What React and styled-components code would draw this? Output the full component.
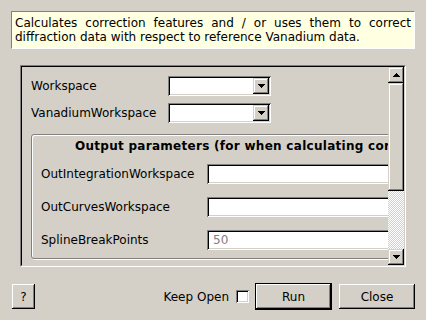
import React from 'react';
import styled, { createGlobalStyle } from 'styled-components';

const GlobalStyle = createGlobalStyle`
    body {
        margin: 0;
        background: #d4d0c8;
        font-family: "DejaVu Sans", "Liberation Sans", sans-serif;
        font-size: 12px;
        color: #000;
    }
`;

// windows-ish bevels
const raised = `
    box-shadow: inset -1px -1px #000, inset 1px 1px #fff, inset -2px -2px #808080;
`;
const raisedSoft = `
    box-shadow: inset -1px -1px #000, inset 1px 1px #d4d0c8, inset -2px -2px #808080, inset 2px 2px #fff;
`;
const sunken = `
    box-shadow: inset 1px 1px #808080, inset -1px -1px #fff, inset 2px 2px #000, inset -2px -2px #d4d0c8;
`;

const Page = styled.div`
    width: 426px;
    height: 320px;
    box-sizing: border-box;
    padding: 11px 11px 0;
    display: flex;
    flex-direction: column;
`;

const Description = styled.div`
    width: 404px;
    height: 38px;
    box-sizing: border-box;
    padding: 4px 3px;
    background: #ffffe1;
    border: 1px solid;
    border-color: #808080 #fff #fff #808080;
    line-height: 14px;
    text-align: justify;
`;

const ScrollFrame = styled.div`
    margin: 16px 9px 0;
    height: 202px;
    box-sizing: border-box;
    border: 1px solid;
    border-color: #808080 #fff #fff #808080;
    display: flex;
`;

const ScrollInner = styled.div`
    flex: 1;
    display: flex;
    min-width: 0;
    border: 1px solid;
    border-color: #000 #d4d0c8 #d4d0c8 #000;
`;

const Viewport = styled.div`
    flex: 1;
    min-width: 0;
    overflow: hidden;
`;

const Content = styled.div`
    width: 560px;
    box-sizing: border-box;
    padding: 9px 0 0 9px;
`;

const ParamGrid = styled.div`
    display: grid;
    grid-template-columns: ${p => p.$labelWidth}px ${p => p.$fieldWidth}px;
    row-gap: ${p => p.$gap}px;
    align-items: center;
`;

const Label = styled.div`
    line-height: 14px;
    white-space: nowrap;
`;

const Combo = styled.div`
    height: 20px;
    box-sizing: border-box;
    padding: 2px;
    background: #fff;
    display: flex;
    justify-content: flex-end;
    ${sunken}
`;

const ArrowButton = styled.div`
    width: 16px;
    height: 16px;
    flex: none;
    background: #d4d0c8;
    display: flex;
    align-items: center;
    justify-content: center;
    ${raisedSoft}
`;

const LineEdit = styled.div`
    height: 20px;
    box-sizing: border-box;
    padding: 2px 6px;
    background: #fff;
    line-height: 16px;
    color: #808080;
    ${sunken}
`;

const Group = styled.div`
    margin-top: 11px;
    border: 1px solid #808080;
    border-radius: 3px;
    box-shadow: inset 1px 1px #fff, 1px 1px #fff;
    padding: 4px 0 8px 9px;
`;

const GroupTitle = styled.div`
    font-weight: bold;
    line-height: 14px;
    letter-spacing: 0.28px;
    padding-left: 34px;
    margin-bottom: 11px;
    white-space: nowrap;
`;

const ScrollBar = styled.div`
    width: 16px;
    display: flex;
    flex-direction: column;
`;

const Thumb = styled.div`
    height: 108px;
    background: #d4d0c8;
    ${raisedSoft}
`;

const Track = styled.div`
    flex: 1;
    background: repeating-conic-gradient(#fff 0 25%, #d4d0c8 0 50%) 0 0 / 2px 2px;
`;

const Footer = styled.div`
    margin-top: 16px;
    height: 27px;
    display: flex;
    align-items: center;
`;

const Button = styled.button`
    width: ${p => p.$width}px;
    height: 25px;
    margin: 0;
    padding: 0;
    border: none;
    background: #d4d0c8;
    font: inherit;
    color: #000;
    ${raised}
`;

const DefaultFrame = styled.div`
    border: 1px solid #000;
    display: flex;
`;

const Spacer = styled.div`
    flex: 1;
`;

const CheckBox = styled.div`
    width: 13px;
    height: 13px;
    background: #fff;
    margin: 0 6px 0 7px;
    ${sunken}
`;

const Arrow = ({ down }) => (
    <svg width="7" height="4" viewBox="0 0 7 4" shapeRendering="crispEdges">
        <polygon points={down ? '0,0 7,0 3.5,4' : '3.5,0 7,4 0,4'} fill="#000" />
    </svg>
);

function App() {
    return (
        <Page>
            <GlobalStyle />
            <Description>
                Calculates correction features and / or uses them to correct diffraction data with respect to reference Vanadium data.
            </Description>

            <ScrollFrame>
                <ScrollInner>
                    <Viewport>
                        <Content>
                            <ParamGrid $labelWidth={137} $fieldWidth={103} $gap={7}>
                                <Label>Workspace</Label>
                                <Combo><ArrowButton><Arrow down /></ArrowButton></Combo>
                                <Label>VanadiumWorkspace</Label>
                                <Combo><ArrowButton><Arrow down /></ArrowButton></Combo>
                            </ParamGrid>
                            <Group>
                                <GroupTitle>Output parameters (for when calculating corrections)</GroupTitle>
                                <ParamGrid $labelWidth={166} $fieldWidth={260} $gap={13}>
                                    <Label>OutIntegrationWorkspace</Label>
                                    <LineEdit />
                                    <Label>OutCurvesWorkspace</Label>
                                    <LineEdit />
                                    <Label>SplineBreakPoints</Label>
                                    <LineEdit>50</LineEdit>
                                </ParamGrid>
                            </Group>
                        </Content>
                    </Viewport>
                    <ScrollBar>
                        <ArrowButton><Arrow /></ArrowButton>
                        <Thumb />
                        <Track />
                        <ArrowButton><Arrow down /></ArrowButton>
                    </ScrollBar>
                </ScrollInner>
            </ScrollFrame>

            <Footer>
                <Button $width={23} style={{ marginLeft: 1 }}>?</Button>
                <Spacer />
                <Label>Keep Open</Label>
                <CheckBox />
                <DefaultFrame><Button $width={75}>Run</Button></DefaultFrame>
                <Button $width={76} style={{ marginLeft: 7 }}>Close</Button>
            </Footer>
        </Page>
    );
}

export default App;
